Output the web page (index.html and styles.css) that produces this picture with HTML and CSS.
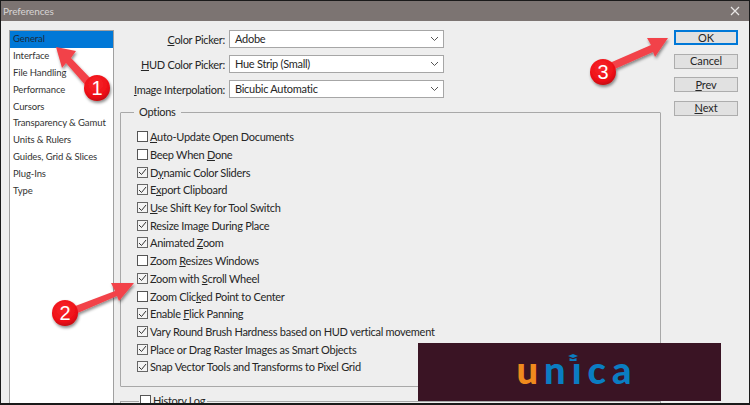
FILE: index.html
```html
<!DOCTYPE html>
<html lang="en">
<head>
<meta charset="utf-8">
<title>Preferences</title>
<link rel="stylesheet" href="styles.css">
</head>
<body>
<div class="dialog">
  <header class="titlebar">
    <span class="title">Preferences</span>
    <svg class="close" width="10" height="10" viewBox="0 0 10 10"><path d="M1 1L9 9M9 1L1 9" stroke="#e8e6e5" stroke-width="1.2" fill="none"/></svg>
  </header>
  <div class="content">
    <ul class="nav">
      <li class="nav-item selected">General</li>
      <li class="nav-item">Interface</li>
      <li class="nav-item">File Handling</li>
      <li class="nav-item">Performance</li>
      <li class="nav-item">Cursors</li>
      <li class="nav-item">Transparency &amp; Gamut</li>
      <li class="nav-item">Units &amp; Rulers</li>
      <li class="nav-item">Guides, Grid &amp; Slices</li>
      <li class="nav-item">Plug-Ins</li>
      <li class="nav-item">Type</li>
    </ul>
    <main class="main">
      <div class="fields">
        <div class="field"><label class="field-label"><u>C</u>olor Picker:</label><div class="select"><span>Adobe</span><svg class="chev" width="9" height="6" viewBox="0 0 9 6"><path d="M1 1L4.5 4.5L8 1" stroke="#555" stroke-width="1" fill="none"/></svg></div></div>
        <div class="field"><label class="field-label"><u>H</u>UD Color Picker:</label><div class="select"><span>Hue Strip (Small)</span><svg class="chev" width="9" height="6" viewBox="0 0 9 6"><path d="M1 1L4.5 4.5L8 1" stroke="#555" stroke-width="1" fill="none"/></svg></div></div>
        <div class="field"><label class="field-label"><u>I</u>mage Interpolation:</label><div class="select"><span>Bicubic Automatic</span><svg class="chev" width="9" height="6" viewBox="0 0 9 6"><path d="M1 1L4.5 4.5L8 1" stroke="#555" stroke-width="1" fill="none"/></svg></div></div>
      </div>
      <fieldset class="options">
        <legend class="options-legend">Options</legend>
        <div class="check"><span class="box"></span><span><u>A</u>uto-Update Open Documents</span></div>
        <div class="check"><span class="box"></span><span>Beep When <u>D</u>one</span></div>
        <div class="check"><span class="box on"><svg width="9" height="8" viewBox="0 0 9 8"><path d="M1 4L3.5 6.5L8 1" stroke="#333" stroke-width="1" fill="none"/></svg></span><span>D<u>y</u>namic Color Sliders</span></div>
        <div class="check"><span class="box on"><svg width="9" height="8" viewBox="0 0 9 8"><path d="M1 4L3.5 6.5L8 1" stroke="#333" stroke-width="1" fill="none"/></svg></span><span>E<u>x</u>port Clipboard</span></div>
        <div class="check"><span class="box on"><svg width="9" height="8" viewBox="0 0 9 8"><path d="M1 4L3.5 6.5L8 1" stroke="#333" stroke-width="1" fill="none"/></svg></span><span><u>U</u>se Shift Key for Tool Switch</span></div>
        <div class="check"><span class="box on"><svg width="9" height="8" viewBox="0 0 9 8"><path d="M1 4L3.5 6.5L8 1" stroke="#333" stroke-width="1" fill="none"/></svg></span><span>Resize Ima<u>g</u>e During Place</span></div>
        <div class="check"><span class="box on"><svg width="9" height="8" viewBox="0 0 9 8"><path d="M1 4L3.5 6.5L8 1" stroke="#333" stroke-width="1" fill="none"/></svg></span><span>Animated <u>Z</u>oom</span></div>
        <div class="check"><span class="box"></span><span>Zoom <u>R</u>esizes Windows</span></div>
        <div class="check"><span class="box on"><svg width="9" height="8" viewBox="0 0 9 8"><path d="M1 4L3.5 6.5L8 1" stroke="#333" stroke-width="1" fill="none"/></svg></span><span>Zoom with <u>S</u>croll Wheel</span></div>
        <div class="check"><span class="box"></span><span>Zoom Clic<u>k</u>ed Point to Center</span></div>
        <div class="check"><span class="box on"><svg width="9" height="8" viewBox="0 0 9 8"><path d="M1 4L3.5 6.5L8 1" stroke="#333" stroke-width="1" fill="none"/></svg></span><span>Enable <u>F</u>lick Panning</span></div>
        <div class="check"><span class="box on"><svg width="9" height="8" viewBox="0 0 9 8"><path d="M1 4L3.5 6.5L8 1" stroke="#333" stroke-width="1" fill="none"/></svg></span><span>Vary Round Brush Hardness based on HUD vertical movement</span></div>
        <div class="check"><span class="box on"><svg width="9" height="8" viewBox="0 0 9 8"><path d="M1 4L3.5 6.5L8 1" stroke="#333" stroke-width="1" fill="none"/></svg></span><span>Place or Drag Raster Images as Smart Objects</span></div>
        <div class="check"><span class="box on"><svg width="9" height="8" viewBox="0 0 9 8"><path d="M1 4L3.5 6.5L8 1" stroke="#333" stroke-width="1" fill="none"/></svg></span><span>Snap Vector Tools and Transforms to Pixel Grid</span></div>
      </fieldset>
      <fieldset class="history">
        <legend class="history-legend"><span class="box"></span><span>History Log</span></legend>
      </fieldset>
    </main>
    <aside class="buttons">
      <button class="btn default">OK</button>
      <button class="btn">Cancel</button>
      <button class="btn"><u>P</u>rev</button>
      <button class="btn"><u>N</u>ext</button>
    </aside>
  </div>
</div>

<svg class="marks" width="750" height="405" viewBox="0 0 750 405">
  <defs>
    <radialGradient id="ball" cx="45%" cy="35%" r="70%"><stop offset="0" stop-color="#f8272c"/><stop offset="0.7" stop-color="#ee0f16"/><stop offset="1" stop-color="#b80a0f"/></radialGradient>
    <filter id="sh" x="-30%" y="-30%" width="160%" height="160%"><feDropShadow dx="1" dy="2" stdDeviation="1.6" flood-color="#000" flood-opacity=".45"/></filter>
  </defs>
  <g filter="url(#sh)">
    <path d="M56 47L76 51L71 58L93 81L87 87L66 63L62 68Z" fill="#f2434a"/>
    <circle cx="97" cy="88" r="13" fill="url(#ball)"/>
    <path d="M134 283L111 283L115 291L70 308L73 315L117 296L119 301Z" fill="#f2434a"/>
    <circle cx="65" cy="313" r="13" fill="url(#ball)"/>
    <path d="M668 38L647 38L651 45L605 65L608 72L653 52L655 57Z" fill="#f2434a"/>
    <circle cx="603" cy="72" r="13" fill="url(#ball)"/>
  </g>
  <text class="num" x="97" y="95">1</text>
  <text class="num" x="65" y="320">2</text>
  <text class="num" x="603" y="79">3</text>
</svg>

<div class="logo">
  <svg class="logo-hat" width="10" height="7" viewBox="0 0 10 7"><path d="M5 0L10 2L5 4L0 2Z M1.500 4L5 5.200L8.500 4V7H1.500Z" fill="#0a7dc2"/></svg>
  <span class="logo-text"><span class="logo-u">u</span>n&#305;ca</span>
</div>
```

FILE: styles.css
```css
* { box-sizing: border-box; }
html, body { margin: 0; padding: 0; }
body {
  width: 750px;
  height: 405px;
  overflow: hidden;
  background: #1a1a1a;
  position: relative;
  font-family: "Lato", "Liberation Sans", sans-serif;
  font-size: 11px;
  letter-spacing: -0.28px;
  color: #262626;
}
.dialog {
  margin: 1px 1px 0 1px;
  height: 402px;
  background: #eeeeee;
  display: flex;
  flex-direction: column;
  overflow: hidden;
}
.titlebar {
  height: 20px;
  flex: none;
  background: #7c7472;
  color: #d8d5d4;
  display: flex;
  align-items: center;
  justify-content: space-between;
  padding: 0 8px 0 2px;
  font-size: 10px;
  letter-spacing: -0.1px;
}
.close { margin-right: 1px; }
.content {
  flex: 1;
  display: flex;
  padding: 9px 11px 0 8px;
  min-height: 0;
}
.nav {
  list-style: none;
  margin: 0;
  padding: 0;
  width: 105px;
  flex: none;
  background: #fff;
  border: 1px solid #a0a0a0;
  border-bottom: 0;
  font-size: 9.5px;
  letter-spacing: -0.1px;
}
.nav-item {
  height: 16.9px;
  line-height: 16px;
  padding-left: 3px;
  color: #333;
}
.nav-item.selected { background: #0078d7; color: #1a2b3c; }
.main {
  width: 541px;
  margin-left: 6px;
  flex: none;
  display: flex;
  flex-direction: column;
}
.fields { display: flex; flex-direction: column; gap: 7px; }
.field { display: flex; align-items: center; height: 18px; }
.field-label { width: 105px; text-align: right; margin-right: 4px; flex: none; }
.select {
  width: 215px;
  height: 18px;
  background: #fff;
  border: 1px solid #a6a6a6;
  display: flex;
  align-items: center;
  justify-content: space-between;
  padding: 0 4px 0 5px;
}
.select span { margin-top: -1px; }
.options {
  margin: 7px 0 0 0;
  padding: 9px 0 0 16px;
  height: 282px;
  border: 1px solid #a8a8a8;
  border-radius: 1px;
  flex: none;
}
.options-legend {
  padding: 0 5px;
  margin-left: -3px;
  line-height: 14px;
}
.check {
  height: 17.7px;
  display: flex;
  align-items: center;
  gap: 2px;
  white-space: nowrap;
}
.box {
  width: 11px;
  height: 11px;
  flex: none;
  background: #fff;
  border: 1px solid #555;
  display: flex;
  align-items: center;
  justify-content: center;
}
.box.on { background: #f4f4f4; border-color: #666; }
.history {
  margin: 8px 0 0 0;
  padding: 0;
  height: 20px;
  border: 1px solid #a8a8a8;
  flex: none;
}
.history-legend {
  display: flex;
  align-items: flex-start;
  gap: 2px;
  margin-left: 18px;
  padding: 0 2px 0 1px;
  line-height: 12px;
}
.buttons {
  width: 64px;
  margin-left: 13px;
  flex: none;
  display: flex;
  flex-direction: column;
  gap: 8.500px;
}
.btn {
  height: 15px;
  padding: 0;
  background: #e1e1e1;
  border: 1px solid #adadad;
  border-radius: 0;
  font: inherit;
  line-height: 12px;
  letter-spacing: -0.1px;
  color: #262626;
}
.btn.default { border: 2px solid #0078d7; }
.marks { position: absolute; left: 0; top: 0; pointer-events: none; }
.num {
  font-family: "Liberation Sans", sans-serif;
  font-size: 20px;
  fill: #fff;
  text-anchor: middle;
}
.logo {
  position: absolute;
  left: 418px;
  top: 343px;
  width: 303px;
  height: 58px;
  background: #3a1424;
  display: flex;
  justify-content: center;
  padding-left: 15px;
  letter-spacing: 0;
}
.logo-text {
  font-family: "Lato", sans-serif;
  font-weight: 900;
  font-size: 38px;
  letter-spacing: 6px;
  line-height: 52px;
  color: #0a7dc2;
}
.logo-u { color: #f08a1d; }
.logo-hat { position: absolute; left: 150px; top: 11px; }
```
